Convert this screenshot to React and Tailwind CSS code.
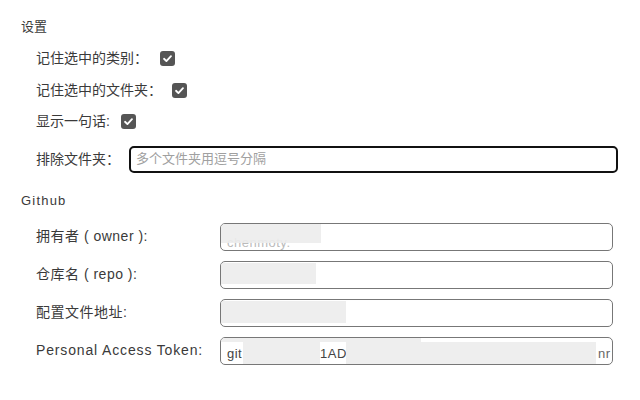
import React from "react";

const Check = () => (
  <span className="inline-flex items-center justify-center w-[15px] h-[15px] rounded-[3px] bg-[#555555]">
    <svg width="11" height="11" viewBox="0 0 12 12" fill="none">
      <path d="M2.2 6.3 L4.8 8.8 L9.8 3.4" stroke="white" strokeWidth="2" strokeLinecap="round" strokeLinejoin="round" />
    </svg>
  </span>
);

const Blur = ({ className }) => (
  <div className={"absolute bg-[#ececec] opacity-90 " + className} />
);

export default function App() {
  return (
    <div
      className="w-[640px] h-[400px] bg-white text-[#3a3a3a] text-[14px] pl-[21px] pt-[17px] overflow-hidden"
      style={{ fontFamily: '"Liberation Sans", "Noto Sans CJK SC", sans-serif' }}
    >
      <div className="h-[20px] leading-[20px] text-[13px]">设置</div>
      <div className="pl-[15px] mt-[6px]">
        <div className="h-[31.5px] flex items-center gap-[12px]">
          <span>记住选中的类别：</span>
          <Check />
        </div>
        <div className="h-[31.5px] flex items-center gap-[10px]">
          <span>记住选中的文件夹：</span>
          <Check />
        </div>
        <div className="h-[31.5px] flex items-center gap-[11px]">
          <span>显示一句话:</span>
          <Check />
        </div>
        <div className="mt-[8px] flex items-center">
          <span className="w-[93px]">排除文件夹：</span>
          <div className="w-[489px] h-[27px] border-2 border-[#111] rounded-[5px] flex items-center pl-[5px] text-[13px] text-[#a0a0a0]">
            多个文件夹用逗号分隔
          </div>
        </div>
      </div>
      <div className="mt-[18px] h-[20px] leading-[20px] text-[13px] tracking-[1.2px]">Github</div>
      <div className="pl-[15px] mt-[12px] flex flex-col gap-[9.5px]">
        {[
          ["拥有者 ( owner ):", "owner"],
          ["仓库名 ( repo ):", "repo"],
          ["配置文件地址:", "path"],
          ["Personal Access Token:", "token"],
        ].map(([label, key]) => (
          <div key={key} className="flex items-center h-[28.5px]">
            <span className={"w-[184px] " + (key === "token" ? "tracking-[0.85px]" : "tracking-[0.5px]")}>{label}</span>
            <div className="relative w-[393px] h-[28.5px] border border-[#777] rounded-[5px] overflow-hidden text-[13px] text-[#444] tracking-[0.5px]">
              {key === "owner" && (
                <>
                  <span className="absolute left-[6px] top-[9px] text-[#bbb]">chenmoty.</span>
                  <Blur className="left-[-3px] top-[-1px] w-[103px] h-[20px]" />
                </>
              )}
              {key === "repo" && (
                <>
                  <Blur className="left-[0px] top-[1px] w-[95px] h-[21px]" />
                </>
              )}
              {key === "path" && (
                <>
                  <Blur className="left-[0px] top-[1px] w-[125px] h-[22px]" />
                </>
              )}
              {key === "token" && (
                <>
                  <span className="absolute left-[6px] top-[6px]">git</span>
                  <span className="absolute left-[99px] top-[6px]">1AD</span>
                  <span className="absolute left-[377px] top-[6px] text-[#666]">nr</span>
                  <Blur className="left-[-2px] top-[-2px] w-[202px] h-[6px]" />
                  <Blur className="left-[22px] top-[4px] w-[77px] h-[25px]" />
                  <Blur className="left-[125px] top-[4px] w-[250px] h-[25px]" />
                </>
              )}
            </div>
          </div>
        ))}
      </div>
    </div>
  );
}
